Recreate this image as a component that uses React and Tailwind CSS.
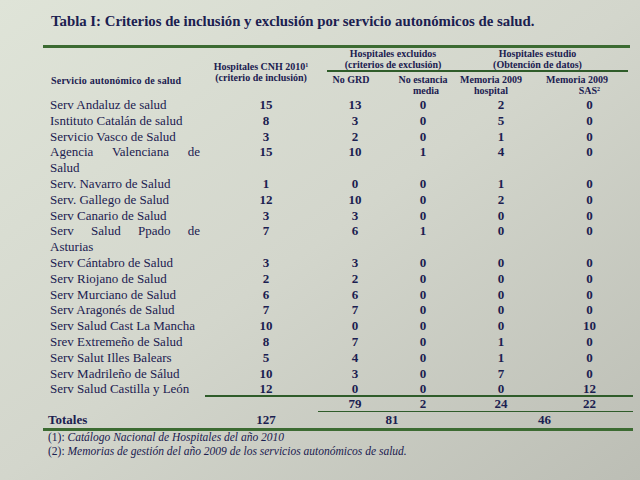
import React from 'react'

const rows = [
  ['Serv Andaluz de salud', 15, 13, 0, 2, 0],
  ['Isntituto Catalán de salud', 8, 3, 0, 5, 0],
  ['Servicio Vasco de Salud', 3, 2, 0, 1, 0],
  ['Agencia Valenciana de Salud', 15, 10, 1, 4, 0],
  ['Serv. Navarro de Salud', 1, 0, 0, 1, 0],
  ['Serv. Gallego de Salud', 12, 10, 0, 2, 0],
  ['Serv Canario de Salud', 3, 3, 0, 0, 0],
  ['Serv Salud Ppado de Asturias', 7, 6, 1, 0, 0],
  ['Serv Cántabro de Salud', 3, 3, 0, 0, 0],
  ['Serv Riojano de Salud', 2, 2, 0, 0, 0],
  ['Serv Murciano de Salud', 6, 6, 0, 0, 0],
  ['Serv Aragonés de Salud', 7, 7, 0, 0, 0],
  ['Serv Salud Cast La Mancha', 10, 0, 0, 0, 10],
  ['Srev Extremeño de Salud', 8, 7, 0, 1, 0],
  ['Serv Salut Illes Balears', 5, 4, 0, 1, 0],
  ['Serv Madrileño de Sálud', 10, 3, 0, 7, 0],
  ['Serv Salud Castilla y León', 12, 0, 0, 0, 12],
]

const cols = 'grid grid-cols-[169px_108px_70px_66px_90px_87px]'

export default function App() {
  return (
    <div className="w-[640px] h-[480px] overflow-hidden bg-linear-to-br from-[#dfe4d8] via-[#d3d6cc] to-[#bcbeb5] text-[#1b2050] font-['Liberation_Serif','Times_New_Roman',serif]">
      <div className="pl-[43px] w-[633px]">
        {/* Title */}
        <h1 className="pt-[12px] pl-[8px] text-[14.8px] leading-[18px] font-bold whitespace-nowrap">
          Tabla I: Criterios de inclusión y exclusión por servicio autonómicos de salud.
        </h1>

        <div className="mt-[15px] mr-[3px] h-[3px] bg-[#3c6b32]" />

        {/* Header */}
        <div className="flex text-[10px] leading-[11px] font-bold whitespace-nowrap">
          <div className="w-[169px] pl-[8px] pt-[27px] tracking-[0.2px]">Servicio autonómico de salud</div>
          <div className="w-[108px] pt-[13px] pr-[10px] text-center">
            <div>Hospitales CNH 2010<sup className="text-[6px]">1</sup></div>
            <div>(criterio de inclusión)</div>
          </div>
          <div className="w-[136px] flex flex-col">
            <div className="ml-[7px] pl-[3px] text-center border-b-2 border-[#2f5c2a]">
              <div>Hospitales excluidos</div>
              <div>(criterios de exclusión)</div>
            </div>
            <div className="flex pt-[2px]">
              <div className="w-[70px] pr-[8px] text-center">No GRD</div>
              <div className="w-[66px] text-center">
                <div>No estancia</div>
                <div className="pl-[6px]">media</div>
              </div>
            </div>
          </div>
          <div className="w-[177px] flex flex-col">
            <div className="mr-[5px] pr-[9px] text-center border-b-2 border-[#2f5c2a]">
              <div>Hospitales estudio</div>
              <div>(Obtención de datos)</div>
            </div>
            <div className="flex pt-[2px]">
              <div className="w-[90px] pr-[20px] text-center">
                <div>Memoria 2009</div>
                <div>hospital</div>
              </div>
              <div className="w-[87px] pr-[33px] text-right">
                <div>Memoria 2009</div>
                <div>SAS<sup className="text-[6px]">2</sup></div>
              </div>
            </div>
          </div>
        </div>

        {/* Body */}
        <div className="pt-[1px] text-[13px] leading-[15.8px]">
          {rows.map(([name, ...nums]) => (
            <div key={name} className={cols}>
              <div className="pl-[7px] pr-[12px] text-justify">{name}</div>
              {nums.map((n, i) => (
                <div key={i} className="text-center font-bold">{n}</div>
              ))}
            </div>
          ))}
        </div>

        <div className="-mt-[2px] ml-[162px] h-[1.5px] bg-[#2f5c2a]" />
        <div className={`${cols} text-[13px] leading-[14px] font-bold`}>
          <div />
          <div />
          <div className="text-center">79</div>
          <div className="text-center">2</div>
          <div className="text-center">24</div>
          <div className="text-center">22</div>
        </div>
        <div className="ml-[275px] h-[1.5px] bg-[#2f5c2a]" />
        <div className={`${cols} text-[13px] leading-[16px] font-bold`}>
          <div className="pl-[5px]">Totales</div>
          <div className="text-center">127</div>
          <div className="col-span-2 pl-[8px] text-center">81</div>
          <div className="col-span-2 text-center">46</div>
        </div>
        <div className="h-[3px] bg-[#3c6b32]" />

        {/* Notes */}
        <div className="-mt-[1px] pl-[5px] text-[11.5px] leading-[14px]">
          <div>(1): <i>Catálogo Nacional de Hospitales del año 2010</i></div>
          <div>(2): <i>Memorias de gestión del año 2009 de los servicios autonómicos de salud.</i></div>
        </div>
      </div>
    </div>
  )
}
